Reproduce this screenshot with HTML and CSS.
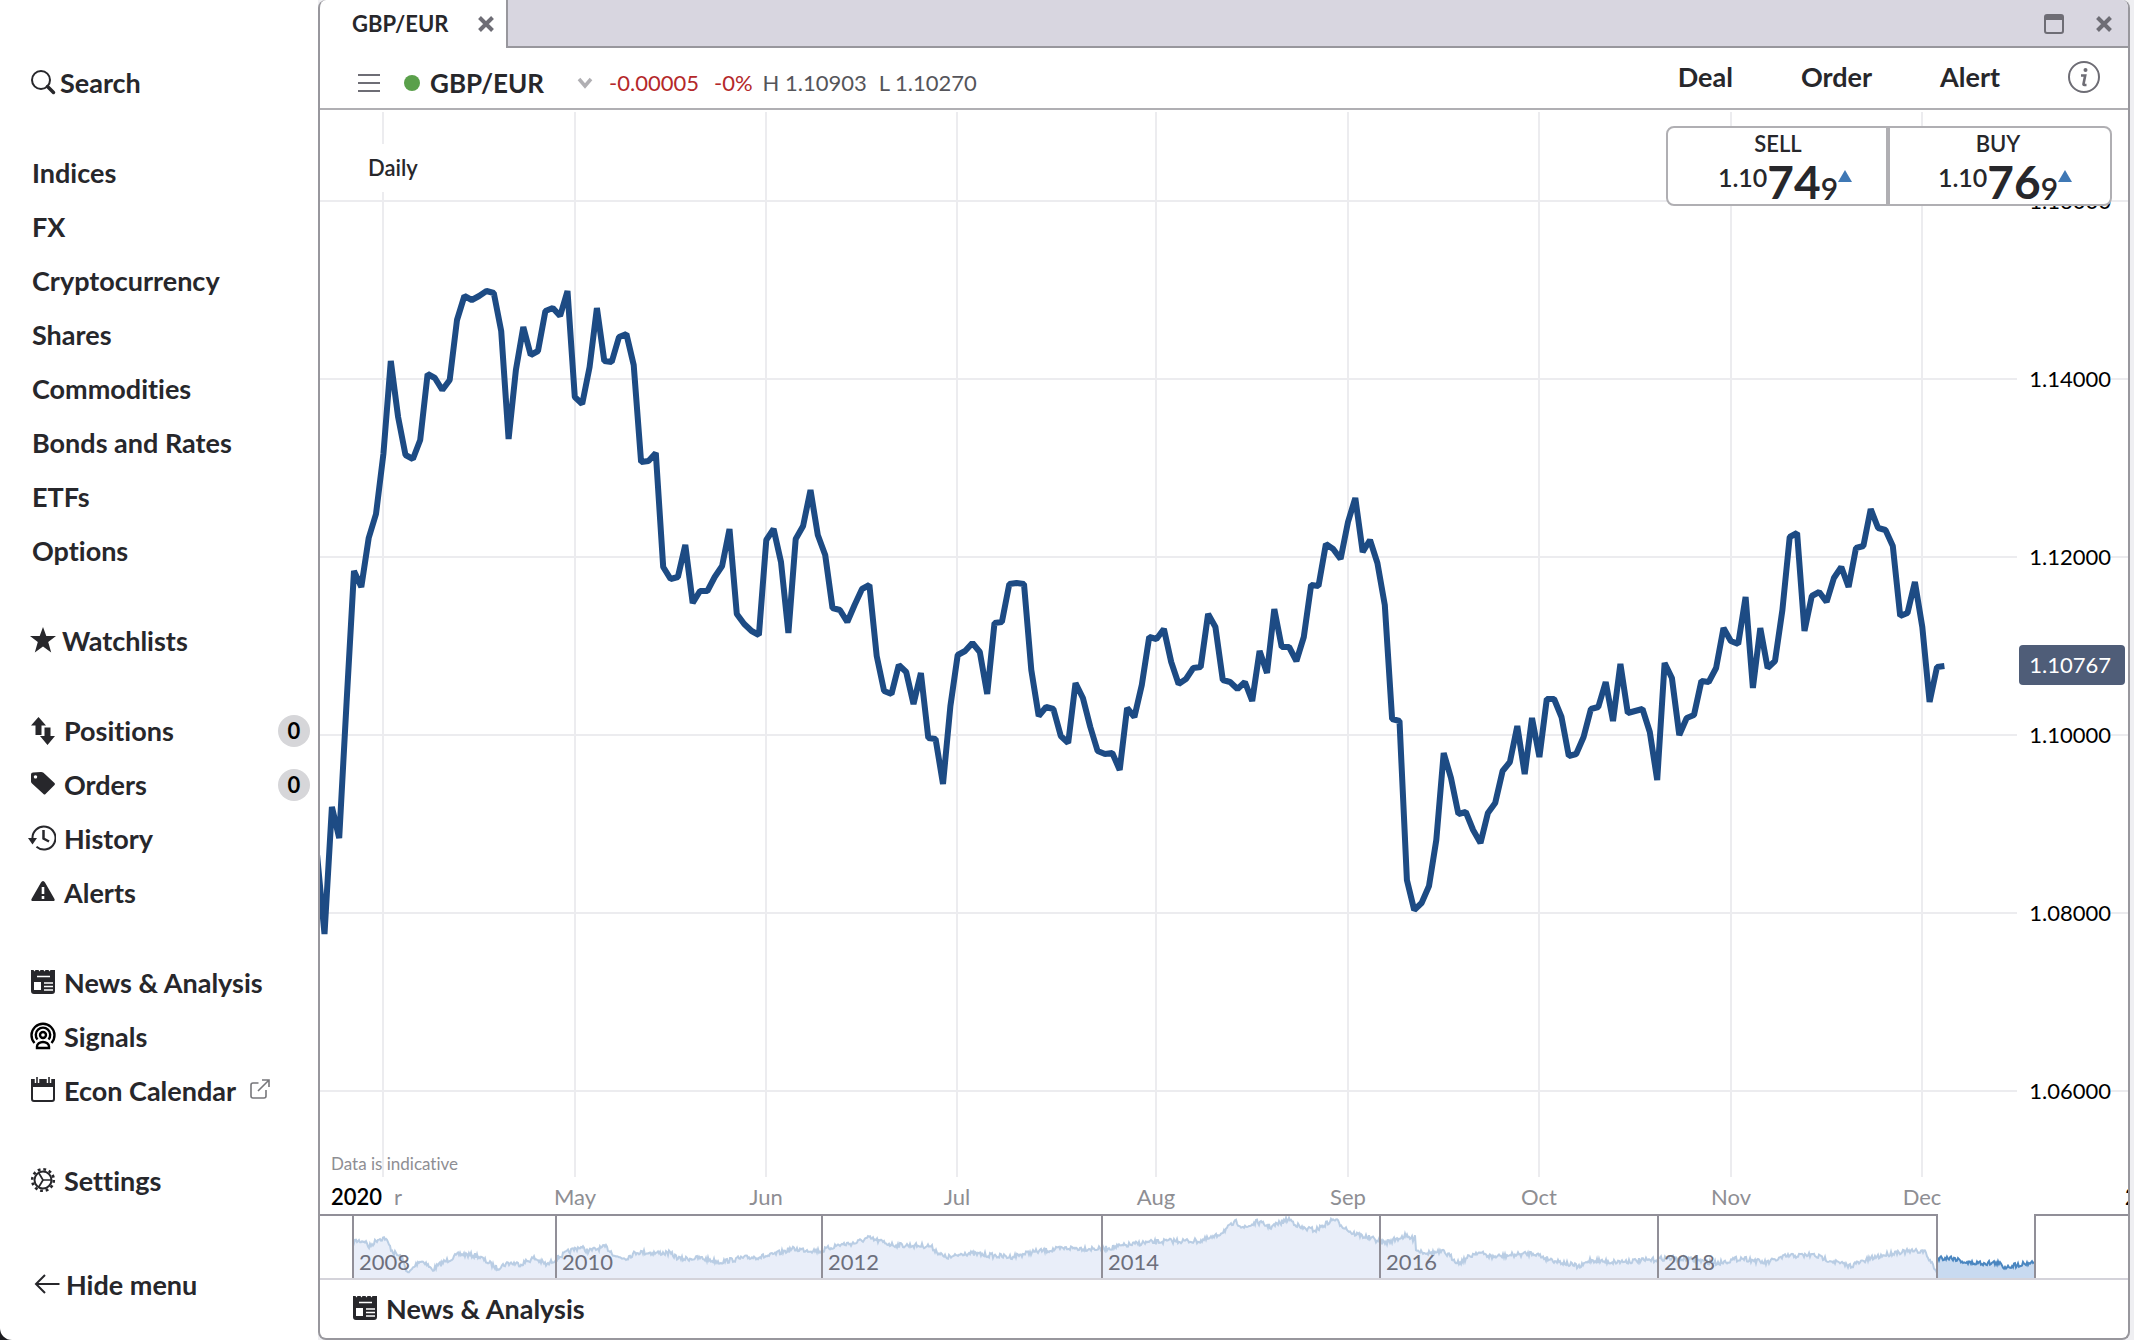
FILE: index.html
```
<!DOCTYPE html>
<html lang="en">
<head>
<meta charset="utf-8">
<title>GBP/EUR</title>
<link rel="stylesheet" href="styles.css">
</head>
<body>
<svg class="sprite" aria-hidden="true">
  <symbol id="i-close" viewBox="0 0 16 16"><path d="M1.500 1.500l13 13M14.500 1.500l-13 13" fill="none" stroke="currentColor" stroke-width="4"/></symbol>
  <symbol id="i-news" viewBox="0 0 26 26">
    <path d="M1 1h2.500l1 1.500 1-1.500h3l1 1.500 1-1.500h3l1 1.500 1-1.500h3l1 1.500 1-1.500H25v21a3 3 0 0 1-3 3H4a3 3 0 0 1-3-3z" fill="currentColor"/>
    <path d="M7 7.500h13M14 14h9M14 17.500h9M14 21h9" fill="none" stroke="#fff" stroke-width="1.600"/>
    <path d="M4 13h7v8H4z" fill="#fff"/>
  </symbol>
</svg>
<div class="app">
  <nav class="sidebar">
    <div class="group">
      <button class="item item-search" type="button">
        <svg class="icon" viewBox="0 0 26 26"><circle cx="11" cy="11" r="9" fill="none" stroke="currentColor" stroke-width="2"/><path d="M17.500 17.500l6 6" stroke="currentColor" stroke-width="3.500" stroke-linecap="round"/></svg>
        <span>Search</span>
      </button>
    </div>
    <div class="group group-plain">
      <a class="item" href="#">Indices</a>
      <a class="item" href="#">FX</a>
      <a class="item" href="#">Cryptocurrency</a>
      <a class="item" href="#">Shares</a>
      <a class="item" href="#">Commodities</a>
      <a class="item" href="#">Bonds and Rates</a>
      <a class="item" href="#">ETFs</a>
      <a class="item" href="#">Options</a>
    </div>
    <div class="group">
      <a class="item item-watch" href="#">
        <svg class="icon" viewBox="0 0 26 26"><path d="M13 0l3.300 9H26l-7.800 6 3 10.500L13 19.500l-8.200 6 3-10.500L0 9h9.700z" fill="currentColor"/></svg>
        <span>Watchlists</span>
      </a>
    </div>
    <div class="group">
      <a class="item" href="#">
        <svg class="icon icon-tall" viewBox="0 0 26 30"><path d="M8.500 1l7.500 8.500h-4.500V19h-6V9.500H1zM14.500 11.500h6V20H25l-7.500 9L10 20h4.500z" fill="currentColor"/></svg>
        <span>Positions</span><span class="badge">0</span>
      </a>
      <a class="item" href="#">
        <svg class="icon" viewBox="0 0 26 26"><path fill-rule="evenodd" d="M1 3.500Q1 1.500 3 1.500L11 1q1.500 0 2.500.8L24.500 12q1 1 0 2L15.500 23q-1 1-2 0L2 12.500q-1-1-1-2zM5.500 4.200a1.700 1.700 0 1 0 .01 0z" fill="currentColor"/></svg>
        <span>Orders</span><span class="badge">0</span>
      </a>
      <a class="item" href="#">
        <svg class="icon icon-wide" viewBox="0 0 28 26"><path d="M4.500 14a11.500 11.500 0 1 1 4 7.800" fill="none" stroke="currentColor" stroke-width="2"/><path d="M0 13h9l-4.500 6.500z" fill="currentColor"/><path d="M15.500 5v8.500l5.500 3" fill="none" stroke="currentColor" stroke-width="2.500"/></svg>
        <span>History</span>
      </a>
      <a class="item" href="#">
        <svg class="icon" viewBox="0 0 26 26"><path d="M13 2q1.200 0 2 1.500L24.500 20q.8 2-1.500 2H3q-2.300 0-1.500-2L11 3.500Q11.800 2 13 2z" fill="currentColor"/><path d="M13 8v7M13 17v3" stroke="#fff" stroke-width="2.600"/></svg>
        <span>Alerts</span>
      </a>
    </div>
    <div class="group">
      <a class="item" href="#"><svg class="icon"><use href="#i-news"/></svg><span>News &amp; Analysis</span></a>
      <a class="item" href="#">
        <svg class="icon icon-black" viewBox="0 0 26 28"><g fill="none" stroke="currentColor" stroke-width="2.400"><path d="M4.500 21a11.500 11.500 0 1 1 17 0"/><path d="M7.500 17.500a7.200 7.200 0 1 1 11 0"/><circle cx="13" cy="13" r="3"/><path d="M7 26v-1.500a6 4.500 0 0 1 12 0V26z"/></g></svg>
        <span>Signals</span>
      </a>
      <a class="item" href="#">
        <svg class="icon" viewBox="0 0 26 26"><rect x="2" y="3" width="22" height="21" rx="2" fill="none" stroke="currentColor" stroke-width="2"/><path d="M1 2h24v8H1z" fill="currentColor"/><path d="M7 0v6M19 0v6" stroke="#fff" stroke-width="4.500"/><path d="M7 0v6M19 0v6" stroke="currentColor" stroke-width="1.600"/></svg>
        <span>Econ Calendar</span>
        <svg class="icon-out" viewBox="0 0 20 20"><path d="M8.500 4H3Q1 4 1 6v11q0 2 2 2h11q2 0 2-2v-6M8 12L18.500 1.500M12 1h7v7" fill="none" stroke="currentColor" stroke-width="1.600"/></svg>
      </a>
    </div>
    <div class="group">
      <a class="item" href="#">
        <svg class="icon" viewBox="0 0 26 26"><g fill="none" stroke="currentColor"><circle cx="13" cy="13" r="8.500" stroke-width="2"/><circle cx="13" cy="13" r="10.800" stroke-width="2.600" stroke-dasharray="2.800 2.855"/><path d="M13 13h8.500M13 13L8.500 5.500M13 13l-4.500 7.500" stroke-width="1.700"/></g></svg>
        <span>Settings</span>
      </a>
    </div>
    <div class="group group-hide">
      <button class="item item-hide" type="button">
        <svg class="icon" viewBox="0 0 26 26"><path d="M25.500 13H2M11 4L2 13l9 9" fill="none" stroke="currentColor" stroke-width="2"/></svg>
        <span>Hide menu</span>
      </button>
    </div>
  </nav>

  <main class="workspace">
    <section class="panel">
      <header class="tabbar">
        <div class="tab"><span>GBP/EUR</span><button class="icon-button" type="button" aria-label="Close tab"><svg class="close"><use href="#i-close"/></svg></button></div>
        <div class="window-controls">
          <button class="icon-button" type="button" aria-label="Maximise"><svg class="maximise" viewBox="0 0 20 20"><rect x="1" y="1" width="18" height="18" rx="2" fill="none" stroke="currentColor" stroke-width="2"/><path d="M1 1h18v5H1z" fill="currentColor"/></svg></button>
          <button class="icon-button" type="button" aria-label="Close window"><svg class="close"><use href="#i-close"/></svg></button>
        </div>
      </header>

      <div class="toolbar">
        <div class="instrument">
          <button class="icon-button" type="button" aria-label="Chart menu"><svg class="menu" viewBox="0 0 22 20"><path d="M0 2h22M0 10h22M0 18h22" stroke="currentColor" stroke-width="2"/></svg></button>
          <span class="status"></span>
          <h1>GBP/EUR</h1>
          <button class="icon-button chevron-button" type="button" aria-label="Choose market"><svg class="chevron" viewBox="0 0 16 12"><path d="M2 2l6 7 6-7" fill="none" stroke="currentColor" stroke-width="3.500"/></svg></button>
          <span class="change">-0.00005</span>
          <span class="change percent">-0%</span>
          <span class="range">H 1.10903</span>
          <span class="range">L 1.10270</span>
        </div>
        <div class="actions">
          <button type="button">Deal</button>
          <button type="button">Order</button>
          <button type="button">Alert</button>
          <button class="icon-button" type="button" aria-label="Information"><svg class="info" viewBox="0 0 32 32"><circle cx="16" cy="16" r="15" fill="none" stroke="currentColor" stroke-width="2"/><circle cx="17.500" cy="9" r="2" fill="currentColor"/><path d="M13 14.500h4.200L15.500 23q-.2 1 .8 1h2.200" fill="none" stroke="currentColor" stroke-width="2.600"/></svg></button>
        </div>
      </div>

      <div class="chart">
        <svg class="plot" id="plot" viewBox="320 110 1808 1104" preserveAspectRatio="none" role="img" aria-label="GBP/EUR daily price"></svg>
        <div class="labels" id="labels"></div>
        <button class="interval" type="button">Daily</button>
        <p class="notice">Data is indicative</p>
        <span class="year">2020</span>
        <div class="deal">
          <button class="side sell" type="button">
            <span class="side-name">SELL</span>
            <span class="price"><span class="big-figure">1.10</span><span class="pips">74</span><span class="fraction">9</span><svg class="up" viewBox="0 0 14 12"><path d="M7 0l7 12H0z" fill="currentColor"/></svg></span>
          </button>
          <button class="side buy" type="button">
            <span class="side-name">BUY</span>
            <span class="price"><span class="big-figure">1.10</span><span class="pips">76</span><span class="fraction">9</span><svg class="up" viewBox="0 0 14 12"><path d="M7 0l7 12H0z" fill="currentColor"/></svg></span>
          </button>
        </div>
      </div>

      <div class="navigator">
        <svg class="plot" id="history" viewBox="320 1214 1808 66" preserveAspectRatio="none" role="img" aria-label="Price history since 2008"></svg>
        <div class="labels" id="years"></div>
      </div>

      <footer class="news">
        <a href="#"><svg class="icon"><use href="#i-news"/></svg><span>News &amp; Analysis</span></a>
      </footer>
    </section>
  </main>
</div>
<script src="chart.js"></script>
</body>
</html>
```
FILE: chart.js
```
// Drawing space of the plot: x 320..2128, y 110..1214.
const LEFT = 320, WIDTH = 1808, TOP = 110, HEIGHT = 1104;
const SVG = 'http://www.w3.org/2000/svg';

function shape(parent, tag, attrs) {
  const el = document.createElementNS(SVG, tag);
  for (const name in attrs) el.setAttribute(name, attrs[name]);
  parent.appendChild(el);
}

function label(parent, cls, text, left, top) {
  const el = document.createElement('span');
  el.className = cls;
  el.textContent = text;
  if (left !== null) el.style.left = (left - LEFT) / WIDTH * 100 + '%';
  if (top !== null) el.style.top = (top - TOP) / HEIGHT * 100 + '%';
  parent.appendChild(el);
}

const months = [['', 383], ['May', 575], ['Jun', 766], ['Jul', 957], ['Aug', 1156], ['Sep', 1348], ['Oct', 1539], ['Nov', 1731], ['Dec', 1922]];
const prices = [['1.16000', 201], ['1.14000', 379], ['1.12000', 557], ['1.10000', 735], ['1.08000', 913], ['1.06000', 1091]];

// Daily closes, one per trading day.
const closes = [855,
  934,807,838,702,571,587,538,514,454,361,417,455,459,440,374,378,390,380,320,296,
  300,296,291,293,331,439,370,327,355,351,311,308,316,291,397,404,367,308,361,362,
  337,334,365,462,461,453,567,579,577,545,603,591,591,577,566,529,614,624,631,635,
  540,529,562,633,539,526,490,535,555,608,610,622,605,589,585,656,691,694,665,672,
  704,673,738,739,784,706,655,651,643,652,694,623,622,584,583,584,670,716,707,709,
  736,743,683,698,727,751,754,753,770,708,717,685,637,639,629,662,684,679,668,667,
  614,627,680,682,689,682,701,651,673,609,647,647,661,637,585,586,544,549,559,522,
  498,552,540,563,605,719,721,880,910,903,886,840,753,778,814,812,830,843,813,803,
  771,762,726,774,718,757,699,699,717,756,754,737,709,707,682,721,664,713,711,709,
  732,780,663,678,735,718,715,681,682,668,628,641,644,597,688,628,668,661,610,537,
  533,631,596,592,602,578,567,587,548,546,509,528,530,546,616,613,582,627,702,667,
  666];

const plot = document.getElementById('plot');
months.forEach(([, x]) => shape(plot, 'line', { class: 'grid', x1: x, x2: x, y1: 112, y2: 1177 }));
prices.forEach(([, y]) => shape(plot, 'line', { class: 'grid', x1: 320, x2: 2128, y1: y, y2: y }));
shape(plot, 'polyline', {
  class: 'closes',
  points: closes.map((y, i) => (324.5 + (i - 1) * 7.363).toFixed(1) + ',' + y).join(' ')
});

const labels = document.getElementById('labels');
months.forEach(([text, x]) => text && label(labels, 'month', text, x, null));
prices.forEach(([text, y]) => label(labels, 'tick', text, null, y));
label(labels, 'tick current', '1.10767', null, 665);
label(labels, 'edge', 'r', 394, null);
label(labels, 'edge next-year', '2021', 2125, null);

const history = [[353,1241],[365,1241],[369,1247],[378,1239],[385,1238],[393,1252],[402,1258],[408,1274],[419,1261],[425,1262],[432,1270],[442,1263],[460,1254],[478,1256],[497,1268],[508,1263],[521,1264],[534,1258],[547,1265],[557,1258],[568,1252],[580,1247],[588,1251],[606,1247],[617,1257],[626,1258],[637,1252],[654,1253],[669,1253],[680,1259],[700,1258],[720,1262],[743,1258],[769,1256],[792,1249],[821,1251],[838,1245],[855,1243],[868,1238],[893,1245],[930,1246],[944,1257],[953,1257],[964,1253],[1010,1257],[1033,1252],[1068,1248],[1102,1249],[1142,1243],[1171,1241],[1200,1241],[1215,1237],[1236,1222],[1245,1228],[1257,1222],[1271,1227],[1289,1219],[1301,1228],[1316,1230],[1334,1219],[1352,1233],[1370,1238],[1385,1243],[1405,1236],[1413,1239],[1415,1234],[1416,1250],[1429,1253],[1444,1252],[1459,1263],[1477,1252],[1492,1257],[1534,1253],[1545,1258],[1580,1267],[1590,1260],[1611,1262],[1653,1260],[1665,1258],[1694,1260],[1718,1263],[1742,1258],[1766,1263],[1787,1256],[1813,1255],[1849,1266],[1876,1257],[1897,1252],[1924,1251],[1934,1267],[1937,1273]];
const recent = [[1938,1258],[1953,1258],[1968,1263],[1998,1263],[2004,1267],[2034,1262]];

let seed = 7;
function jitter(range) {
  seed = (seed * 16807) % 2147483647;
  return (seed / 2147483647 - 0.5) * range;
}

function trace(points, range) {
  const out = [];
  for (let i = 0; i < points.length - 1; i++) {
    const [x0, y0] = points[i], [x1, y1] = points[i + 1];
    for (let x = x0; x < x1; x++) {
      out.push(x + ',' + (y0 + (y1 - y0) * (x - x0) / (x1 - x0) + jitter(range)).toFixed(1));
    }
  }
  out.push(points[points.length - 1].join(','));
  return out.join(' ');
}

const nav = document.getElementById('history');
[[history, 'past'], [recent, 'selected']].forEach(([points, cls]) => {
  const line = trace(points, 5);
  const start = points[0][0], end = points[points.length - 1][0];
  shape(nav, 'polygon', { class: 'area ' + cls, points: start + ',1278 ' + line + ' ' + end + ',1278' });
  shape(nav, 'polyline', { class: 'trace ' + cls, points: line });
});
const years = [['2008', 353], ['2010', 556], ['2012', 822], ['2014', 1102], ['2016', 1380], ['2018', 1658]];
years.forEach(([, x]) => shape(nav, 'line', { class: 'rule', x1: x, x2: x, y1: 1215, y2: 1278 }));
shape(nav, 'polyline', { class: 'rule', points: '320,1215 1937,1215 1937,1278' });
shape(nav, 'polyline', { class: 'rule', points: '2035,1278 2035,1215 2128,1215' });
shape(nav, 'line', { class: 'base', x1: 320, x2: 2128, y1: 1279, y2: 1279 });
years.forEach(([text, x]) => label(document.getElementById('years'), 'year-mark', text, x, null));
```
FILE: styles.css
```
* { box-sizing: border-box; }
html { background: #1c1c20; }
body {
  margin: 0;
  font-family: Lato, "Liberation Sans", sans-serif;
  font-size: 22px;
  line-height: 28px;
  color: #27272b;
  font-variant-ligatures: none;
}
button {
  margin: 0;
  padding: 0;
  border: 0;
  background: none;
  font: inherit;
  color: inherit;
  cursor: pointer;
}
a { color: inherit; text-decoration: none; }
svg { display: block; flex: none; }
.sprite { position: absolute; width: 0; height: 0; }

.app { display: flex; min-height: 100vh; }

/* Sidebar */
.sidebar {
  flex: none;
  width: 318px;
  padding: 56px 8px 27px 30px;
  background: #fff;
  border-bottom-left-radius: 12px;
  display: flex;
  flex-direction: column;
  gap: 36px;
  font-size: 27px;
  font-weight: 700;
}
.group { display: flex; flex-direction: column; }
.group-plain { padding-left: 2px; }
.group-hide { padding: 14px 0 0 4px; }
.item { height: 54px; display: flex; align-items: center; gap: 8px; text-align: left; }
.item-search { gap: 4px; }
.item-watch, .item-hide { gap: 6px; }
.icon { width: 26px; height: 26px; margin-bottom: 3px; }
.icon-tall { height: 30px; margin-bottom: 0; }
.icon-wide { width: 28px; margin-left: -2px; }
.icon-black { height: 28px; color: #000; }
.icon-out { width: 20px; height: 20px; margin: 0 0 4px 6px; color: #77777b; }
.badge {
  width: 32px;
  height: 32px;
  margin-left: auto;
  border-radius: 16px;
  background: #d6d6d9;
  color: #000;
  font-size: 22px;
  line-height: 32px;
  text-align: center;
}

/* Window */
.workspace { flex: 1; min-width: 0; display: flex; background: #efeff2; padding-right: 4px; }
.panel {
  flex: 1;
  min-width: 0;
  display: flex;
  flex-direction: column;
  overflow: hidden;
  border: solid #98979d;
  border-width: 0 2px 2px;
  border-radius: 8px;
  background: #fff;
}
.tabbar { height: 48px; display: flex; color: #6e6d75; }
.tab {
  width: 188px;
  padding: 0 12px 0 32px;
  display: flex;
  align-items: center;
  justify-content: space-between;
  border-right: 2px solid #98979d;
}
.tab span { color: #27272b; font-weight: 700; }
.window-controls {
  flex: 1;
  display: flex;
  align-items: center;
  justify-content: flex-end;
  gap: 32px;
  padding: 2px 16px 0 0;
  background: #d8d6e0;
  border-bottom: 2px solid #98979d;
}
.close { width: 16px; height: 16px; }
.maximise { width: 20px; height: 20px; }

.toolbar {
  height: 62px;
  display: flex;
  justify-content: space-between;
  border-bottom: 2px solid #b0afb3;
}
.instrument { display: flex; align-items: center; padding: 9px 0 0 38px; white-space: nowrap; }
.menu { width: 22px; height: 20px; color: #6e6d75; }
.status { width: 16px; height: 16px; margin: 0 10px 0 24px; border-radius: 8px; background: #5aa04b; }
h1 { margin: 0; font-size: 26px; font-weight: 700; }
.chevron-button { margin: 0 16px 0 33px; color: #b0afb3; }
.chevron { width: 16px; height: 12px; }
.change { color: #b4282a; }
.percent { margin: 0 10px 0 15px; }
.range { margin-right: 12px; color: #55555a; }
.actions {
  display: flex;
  align-items: center;
  gap: 68px;
  padding: 0 28px 2px 0;
  font-size: 27px;
  font-weight: 700;
}
.info { width: 32px; height: 32px; color: #6e6d75; }

/* Chart */
.chart { position: relative; flex: 1; min-height: 600px; overflow: hidden; }
.plot { position: absolute; inset: 0; width: 100%; height: 100%; }
.plot * { vector-effect: non-scaling-stroke; }
.grid { stroke: #ececef; stroke-width: 2; }
.closes { fill: none; stroke: #1d4b84; stroke-width: 6; stroke-linejoin: bevel; }
.labels { position: absolute; inset: 0; overflow: hidden; }
.labels span { position: absolute; white-space: nowrap; }
.month { bottom: 3px; transform: translateX(-50%); color: #8e8e93; }
.edge { bottom: 3px; color: #8e8e93; }
.next-year { color: #000; font-weight: 600; }
.tick { right: 17px; padding-left: 12px; transform: translateY(-50%); background: #fff; color: #000; }
.labels .current {
  right: 3px;
  padding: 6px 14px 6px 10px;
  border-radius: 4px;
  background: #4f5d78;
  color: #fff;
}
.interval { position: absolute; top: 34px; left: 32px; padding: 10px 16px; background: #fff; font-weight: 600; }
.notice { position: absolute; left: 11px; bottom: 36px; margin: 0; font-size: 17px; color: #8e8e93; }
.year { position: absolute; left: 11px; bottom: 3px; color: #000; font-weight: 600; }
.deal {
  position: absolute;
  top: 16px;
  right: 16px;
  display: flex;
  width: 446px;
  height: 80px;
  border: 2px solid #b0afb3;
  border-radius: 8px;
  background: #fff;
}
.side { flex: 1; display: flex; flex-direction: column; align-items: center; gap: 7px; padding-top: 4px; font-weight: 600; }
.sell { padding-left: 2px; }
.buy { border-left: 4px solid #b0afb3; padding-right: 4px; }
.side-name { line-height: 24px; }
.price { display: flex; padding-left: 14px; }
.big-figure { font-size: 25px; line-height: 28px; }
.pips { font-size: 46px; line-height: 38px; font-weight: 700; }
.fraction { align-self: flex-end; font-size: 30px; line-height: 26px; }
.up { width: 14px; height: 12px; margin-top: 7px; color: #3f78b5; }

/* Navigator */
.navigator { position: relative; height: 66px; }
.area { stroke: none; }
.area.past { fill: #e9eef9; }
.area.selected { fill: #c8daf0; }
.trace { fill: none; stroke-width: 2; }
.trace.past { stroke: #b9cde4; }
.trace.selected { stroke: #4a86c0; }
.rule { fill: none; stroke: #918f98; stroke-width: 2; }
.base { stroke: #d4d3da; stroke-width: 2; }
.year-mark { bottom: 4px; padding-left: 6px; color: #6d6f7c; }

.news { height: 58px; padding-left: 32px; display: flex; align-items: center; font-size: 27px; font-weight: 700; }
.news a { display: flex; align-items: center; gap: 8px; }
```
